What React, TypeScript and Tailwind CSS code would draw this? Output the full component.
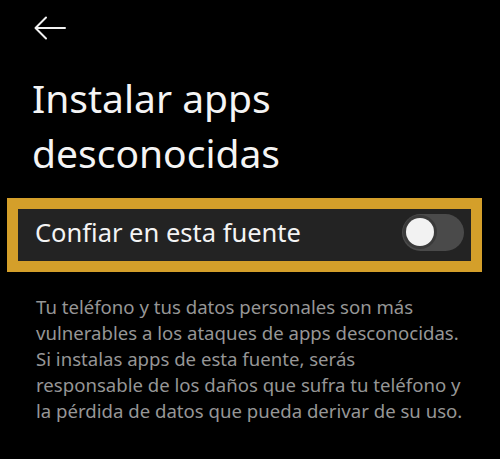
import { useState } from "react";

// ─── Settings screen: unknown sources ────────────────────────────────────────

function BackArrow() {
    return (
        <svg width="32" height="24" viewBox="0 0 32 24" fill="none">
            <path
                d="M31 12H2M12 1.5L1.5 12L12 22.5"
                stroke="#f2f2f2"
                strokeWidth="2"
                strokeLinecap="round"
                strokeLinejoin="round"
            />
        </svg>
    );
}

function Toggle({ on, onChange }: { on: boolean; onChange: () => void }) {
    return (
        <button
            onClick={onChange}
            className={`flex h-[37px] w-[62px] items-center rounded-full px-[4px] ${on ? "bg-[#d49f2a] justify-end" : "bg-[#4a4a4a] justify-start"}`}
        >
            <span className="h-[28px] w-[28px] rounded-full bg-[#f2f2f2] ring-[3px] ring-[#3a3a3a]" />
        </button>
    );
}

export default function App() {
    const [trusted, setTrusted] = useState(false);

    return (
        <div className="h-[459px] w-[500px] overflow-hidden bg-black font-['Noto_Sans',sans-serif]">
            <div className="pl-[34px] pt-[16px]">
                <BackArrow />
            </div>

            <h1 className="mt-[30px] pl-[32px] text-[39px] leading-[55px] font-normal text-[#f4f4f4]">
                Instalar apps
                <br />
                desconocidas
            </h1>

            {/* Highlighted row */}
            <div className="ml-[7px] mt-[18px] w-[475px] border-[11px] border-[#d49f2a] bg-[#232323]">
                <div className="flex h-[52px] items-center justify-between pb-[6px] pl-[17px] pr-[7px]">
                    <span className="text-[25.5px] text-[#f4f4f4]">Confiar en esta fuente</span>
                    <Toggle on={trusted} onChange={() => setTrusted((t) => !t)} />
                </div>
            </div>

            <p className="mt-[22px] pl-[36px] text-[18.6px] leading-[26px] text-[#969696]">
                Tu teléfono y tus datos personales son más
                <br />
                vulnerables a los ataques de apps desconocidas.
                <br />
                Si instalas apps de esta fuente, serás
                <br />
                responsable de los daños que sufra tu teléfono y
                <br />
                la pérdida de datos que pueda derivar de su uso.
            </p>
        </div>
    );
}
